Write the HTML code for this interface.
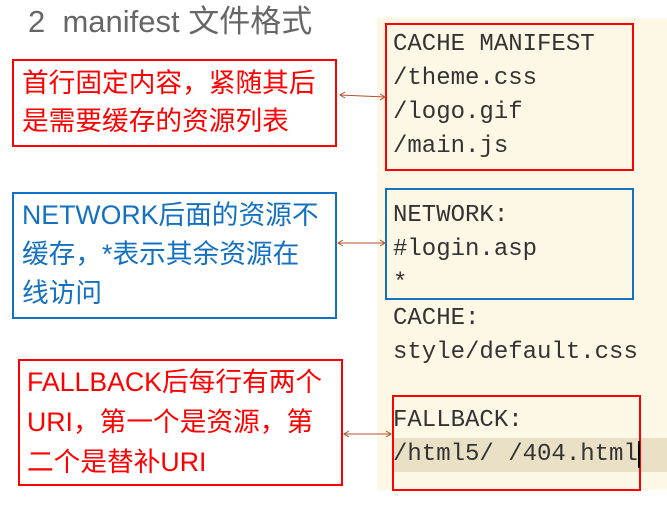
<!DOCTYPE html>
<html><head><meta charset="utf-8"><style>
body{margin:0;width:667px;height:507px;background:#fff;position:relative;overflow:hidden;font-family:"Liberation Sans","Noto Sans CJK SC",sans-serif}
.a{position:absolute;white-space:nowrap}
.box{position:absolute;box-sizing:border-box}
.m{font-family:"Liberation Mono","DejaVu Sans Mono",monospace;font-size:24px;color:#333;line-height:34px}
.c{font-size:26.7px;line-height:38px}
</style></head><body>
<div class="a" style="left:28px;top:3px;font-size:31px;color:#666;line-height:38px">2&nbsp; manifest 文件格式</div>

<div class="box" style="left:377px;top:18px;width:290px;height:472px;background:#fdf8e6"></div>
<div class="box" style="left:392px;top:438px;width:275px;height:34px;background:#e9e0c6"></div>

<div class="box" style="left:385px;top:23px;width:249px;height:148px;border:2px solid #f00"></div>
<div class="box" style="left:385px;top:188px;width:249px;height:112px;border:2px solid #1470c0"></div>
<div class="box" style="left:392px;top:395px;width:249px;height:96px;border:2px solid #f00"></div>

<div class="a m" style="left:393px;top:28px">CACHE MANIFEST<br>/theme.css<br>/logo.gif<br>/main.js</div>
<div class="a m" style="left:393px;top:199px">NETWORK:<br>#login.asp<br>*</div>
<div class="a m" style="left:393px;top:302px">CACHE:<br>style/default.css</div>
<div class="a m" style="left:393px;top:404px">FALLBACK:<br>/html5/ /404.htm<span style="border-right:2px solid #000">l</span></div>

<div class="box" style="left:12px;top:59px;width:325px;height:88px;border:2px solid #f00"></div>
<div class="a c" style="left:22px;top:64px;color:#f00">首行固定内容，紧随其后<br>是需要缓存的资源列表</div>

<div class="box" style="left:12px;top:192px;width:325px;height:127px;border:2px solid #1470c0"></div>
<div class="a c" style="left:22px;top:196px;color:#1470c0;line-height:39px">NETWORK后面的资源不<br>缓存，*表示其余资源在<br>线访问</div>

<div class="box" style="left:18px;top:359px;width:325px;height:127px;border:2px solid #f00"></div>
<div class="a c" style="left:27px;top:362px;color:#f00;line-height:40px">FALLBACK后每行有两个<br>URI，第一个是资源，第<br>二个是替补URI</div>

<svg class="a" style="left:0;top:0" width="667" height="507">
<g stroke="#b5502a" stroke-width="1" fill="none">
<line x1="340" y1="95" x2="385" y2="97"/><polyline points="345,92 340,95 345,98"/><polyline points="380,94 385,97 380,100"/>
<line x1="338" y1="243" x2="385" y2="243"/><polyline points="343,240 338,243 343,246"/><polyline points="380,240 385,243 380,246"/>
<line x1="344" y1="434" x2="391" y2="434"/><polyline points="349,431 344,434 349,437"/><polyline points="386,431 391,434 386,437"/>
</g></svg>
</body></html>
